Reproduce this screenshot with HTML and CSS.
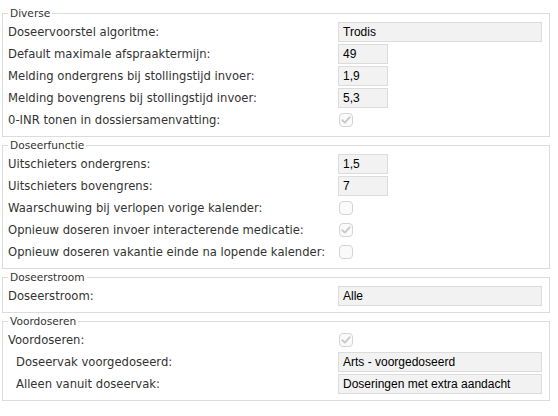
FILE: index.html
```html
<!DOCTYPE html>
<html lang="nl">
<head>
<meta charset="utf-8">
<title>Instellingen</title>
<link rel="stylesheet" href="styles.css">
</head>
<body>
<div class="page">
  <fieldset class="group">
    <legend>Diverse</legend>
    <div class="row"><span class="label">Doseervoorstel algoritme:</span><span class="field wide">Trodis</span></div>
    <div class="row"><span class="label">Default maximale afspraaktermijn:</span><span class="field small">49</span></div>
    <div class="row"><span class="label">Melding ondergrens bij stollingstijd invoer:</span><span class="field small">1,9</span></div>
    <div class="row"><span class="label">Melding bovengrens bij stollingstijd invoer:</span><span class="field small">5,3</span></div>
    <div class="row"><span class="label">0-INR tonen in dossiersamenvatting:</span><span class="check"><svg viewBox="0 0 14 14" width="14" height="14"><path d="M3.3 7.2 L5.9 9.6 L10.6 4.3" fill="none" stroke="#c9c9c9" stroke-width="1.9" stroke-linecap="round" stroke-linejoin="round"/></svg></span></div>
  </fieldset>
  <fieldset class="group">
    <legend>Doseerfunctie</legend>
    <div class="row"><span class="label">Uitschieters ondergrens:</span><span class="field small">1,5</span></div>
    <div class="row"><span class="label">Uitschieters bovengrens:</span><span class="field small">7</span></div>
    <div class="row"><span class="label">Waarschuwing bij verlopen vorige kalender:</span><span class="check"></span></div>
    <div class="row"><span class="label">Opnieuw doseren invoer interacterende medicatie:</span><span class="check"><svg viewBox="0 0 14 14" width="14" height="14"><path d="M3.3 7.2 L5.9 9.6 L10.6 4.3" fill="none" stroke="#c9c9c9" stroke-width="1.9" stroke-linecap="round" stroke-linejoin="round"/></svg></span></div>
    <div class="row"><span class="label">Opnieuw doseren vakantie einde na lopende kalender:</span><span class="check"></span></div>
  </fieldset>
  <fieldset class="group">
    <legend>Doseerstroom</legend>
    <div class="row"><span class="label">Doseerstroom:</span><span class="field wide">Alle</span></div>
  </fieldset>
  <fieldset class="group">
    <legend>Voordoseren</legend>
    <div class="row"><span class="label">Voordoseren:</span><span class="check"><svg viewBox="0 0 14 14" width="14" height="14"><path d="M3.3 7.2 L5.9 9.6 L10.6 4.3" fill="none" stroke="#c9c9c9" stroke-width="1.9" stroke-linecap="round" stroke-linejoin="round"/></svg></span></div>
    <div class="row"><span class="label indent">Doseervak voorgedoseerd:</span><span class="field wide">Arts - voorgedoseerd</span></div>
    <div class="row"><span class="label indent">Alleen vanuit doseervak:</span><span class="field wide">Doseringen met extra aandacht</span></div>
  </fieldset>
</div>
</body>
</html>
```
FILE: styles.css
```css
html, body {
  margin: 0;
  padding: 0;
  background: #ffffff;
}

body {
  font-family: "DejaVu Sans", Verdana, sans-serif;
  color: #333333;
}

.page {
  width: 548px;
  padding: 7px 0 0 2px;
}

.group {
  margin: 0 0 2px 0;
  padding: 2px 5px 5px 5px;
  border: 1px solid #dcdcdc;
  min-width: 0;
}

.group legend {
  padding: 0 2px;
  font-size: 10.6px;
  line-height: 12px;
  color: #333333;
}

.row {
  display: flex;
  align-items: center;
  height: 22px;
}

.label {
  width: 330px;
  flex: none;
  font-size: 11.6px;
  white-space: nowrap;
}

.label.indent {
  padding-left: 8px;
  width: 322px;
}

.field {
  box-sizing: border-box;
  height: 20px;
  display: flex;
  align-items: center;
  padding: 0 4px;
  background: #f2f2f2;
  border: 1px solid #dcdcdc;
  font-family: "Liberation Sans", Arial, sans-serif;
  font-size: 12px;
  color: #000000;
}

.field.wide {
  width: 204px;
}

.field.small {
  width: 50px;
}

.check {
  box-sizing: border-box;
  width: 14px;
  height: 14px;
  margin-left: 1px;
  border: 1px solid #d4d4d4;
  border-radius: 4px;
  background: #fafafa;
  display: flex;
  align-items: center;
  justify-content: center;
}

.check svg {
  display: block;
  flex: none;
}
```
